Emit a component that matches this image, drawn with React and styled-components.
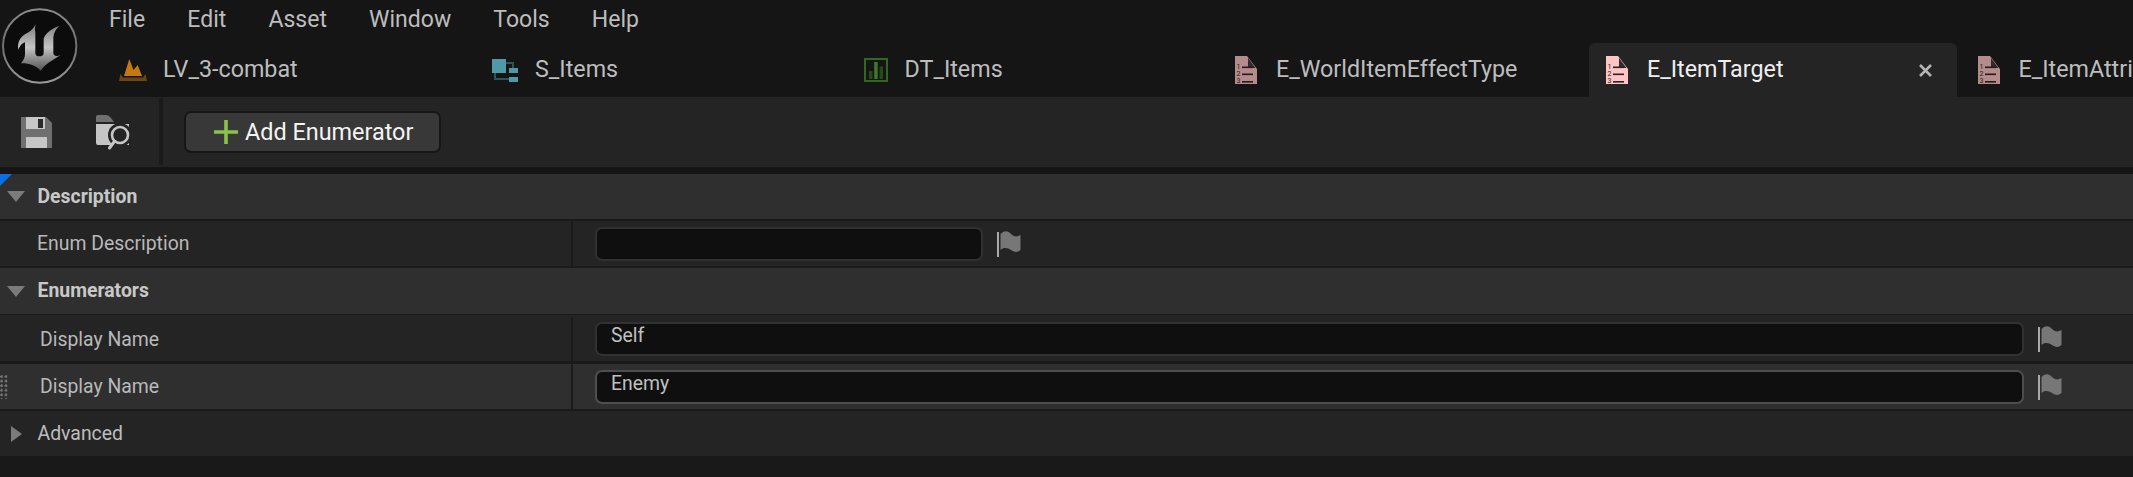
import React from "react";
import styled, { createGlobalStyle } from "styled-components";

const GlobalStyle = createGlobalStyle`
  html, body {
    margin: 0;
    padding: 0;
    background: #191919;
    font-family: Roboto, "Liberation Sans", sans-serif;
  }
`;

const menus = ["File", "Edit", "Asset", "Window", "Tools", "Help"];

const Page = styled.div`
  width: 2133px;
  height: 477px;
  overflow: hidden;
  background: #191919;
  display: flex;
  flex-direction: column;
`;

const Header = styled.header`
  height: 97px;
  background: #151515;
  display: flex;
  flex-shrink: 0;
`;

const LogoSlot = styled.div`
  width: 103px;
  flex-shrink: 0;
  padding: 4px 0 0 0;
`;

const HeaderMain = styled.div`
  flex: 1;
  min-width: 0;
  display: flex;
  flex-direction: column;
`;

const MenuBar = styled.nav`
  height: 43px;
  padding: 0 0 5px 6px;
  box-sizing: border-box;
  display: flex;
  align-items: center;
  gap: 42.2px;
`;

const MenuItem = styled.span`
  font-size: 23px;
  color: #bdbdbd;
`;

const TabRow = styled.div`
  height: 54px;
  display: flex;
  gap: 4px;
  overflow: hidden;
`;

const Tab = styled.div`
  width: 367.5px;
  flex-shrink: 0;
  box-sizing: border-box;
  padding: 0 25px 0 ${(p) => p.$pad}px;
  display: flex;
  align-items: center;
  border-radius: 6px 6px 0 0;
  background: ${(p) => (p.$active ? "#242424" : "transparent")};
`;

const TabIcon = styled.span`
  width: 28px;
  flex-shrink: 0;
  display: flex;
  justify-content: center;
  align-items: center;
`;

const TabLabel = styled.span`
  flex: 1;
  margin: 0 0 2px ${(p) => p.$gap}px;
  font-size: 23.3px;
  white-space: nowrap;
  color: ${(p) => (p.$active ? "#efefef" : "#bdbdbd")};
`;

const Toolbar = styled.div`
  height: 70px;
  flex-shrink: 0;
  background: #242424;
  display: flex;
  align-items: center;
  padding-left: 21px;
`;

const ToolIcon = styled.span`
  display: flex;
  margin-right: ${(p) => p.$gap}px;
`;

const ToolSeparator = styled.span`
  width: 4px;
  height: 67px;
  margin: 0 21px 2px 0;
  background: #1a1a1a;
`;

const AddButton = styled.button`
  width: 257px;
  height: 42px;
  box-sizing: border-box;
  margin-bottom: 1px;
  padding: 0 0 0 28px;
  display: flex;
  align-items: center;
  gap: 7px;
  border: 2px solid #161616;
  border-radius: 7px;
  background: #383838;
  color: #f4f4f4;
  font-family: inherit;
  font-size: 23.4px;
`;

const ToolbarGap = styled.div`
  height: 7px;
  flex-shrink: 0;
  background: #151515;
`;

const Panel = styled.section`
  position: relative;
  display: flex;
  flex-direction: column;
`;

const Corner = styled.span`
  position: absolute;
  top: 0;
  left: 0;
  width: 0;
  height: 0;
  border-top: 12px solid #0b70e6;
  border-right: 12px solid transparent;
`;

const Row = styled.div`
  height: ${(p) => p.$h}px;
  box-sizing: border-box;
  padding-top: ${(p) => p.$top || 0}px;
  display: flex;
  align-items: stretch;
  border-bottom: ${(p) => p.$line}px solid #1a1a1a;
  background: ${(p) => (p.$light ? "#2f2f2f" : "#242424")};
`;

const Category = styled(Row)`
  align-items: center;
  padding-left: ${(p) => (p.$open ? 7 : 11)}px;
`;

const Caret = styled.span`
  width: 0;
  height: 0;
  flex-shrink: 0;
  margin-right: ${(p) => (p.$open ? 12.5 : 15.5)}px;
  border-style: solid;
  border-color: transparent;
  ${(p) =>
    p.$open
      ? "border-width: 11px 9px 0 9px; border-top-color: #7b7b7b;"
      : "border-width: 8.5px 0 8.5px 11px; border-left-color: #7b7b7b;"}
`;

const CategoryTitle = styled.span`
  margin-bottom: 1px;
  font-size: 19.4px;
  color: ${(p) => (p.$plain ? "#bdbdbd" : "#c8c8c8")};
  font-weight: ${(p) => (p.$plain ? 400 : 700)};
`;

const NameCell = styled.div`
  width: 573px;
  flex-shrink: 0;
  box-sizing: border-box;
  padding-left: ${(p) => p.$indent}px;
  display: flex;
  align-items: center;
  border-right: 2px solid #1a1a1a;
`;

const Grip = styled.span`
  width: 9px;
  height: 24px;
  margin: 0 31px 0 0;
  background-image: radial-gradient(circle at 1.5px 1.5px, #787878 1.2px, transparent 1.4px);
  background-size: 4.5px 4.6px;
`;

const NameLabel = styled.span`
  font-size: 19.4px;
  color: #b9b9b9;
`;

const ValueCell = styled.div`
  flex: 1;
  min-width: 0;
  padding: 0 71px 0 22px;
  display: flex;
  align-items: center;
  gap: 14px;
`;

const TextInput = styled.div`
  flex: ${(p) => (p.$narrow ? "0 0 388px" : "1")};
  height: 34px;
  box-sizing: border-box;
  padding: 0 0 0 14px;
  border: 2px solid ${(p) => (p.$hover ? "#4e4e4e" : "#313131")};
  border-radius: 7px;
  background: #0f0f0f;
  font-size: 19.4px;
  line-height: 24px;
  color: #c0c0c0;
`;

const Logo = () => (
  <svg width="84" height="84" viewBox="0 0 252 252">
    <defs>
      <linearGradient id="ueRing" x1="0" y1="0" x2="0" y2="1">
        <stop offset="0" stopColor="#8c8c8c" />
        <stop offset="0.5" stopColor="#6f6f6f" />
        <stop offset="1" stopColor="#9a9a9a" />
      </linearGradient>
      <linearGradient id="ueMark" x1="0" y1="0" x2="0" y2="1">
        <stop offset="0" stopColor="#7d7d7d" />
        <stop offset="0.5" stopColor="#c4c4c4" />
        <stop offset="1" stopColor="#555555" />
      </linearGradient>
    </defs>
    <circle cx="119" cy="126" r="110" fill="#0c0c0c" stroke="url(#ueRing)" strokeWidth="6" />
    <path
      fill="url(#ueMark)"
      d="M107 60 C100 74 92 82 80 88 C62 97 51 113 55 138 C60 124 66 118 75 115 L75 150 C75 160 71 169 63 178 C85 177 106 184 122 200 C135 181 156 169 187 150 C172 159 162 158 160 148 L160 105 C160 90 165 78 178 66 C155 74 136 88 131 104 L131 146 C131 154 126 157 118 157 C110 157 106 153 106 146 L106 85 C104 78 105 70 107 60 Z"
    />
  </svg>
);

const LevelIcon = () => (
  <svg width="28" height="22" viewBox="0 0 28 22">
    <path fill="#c47a0c" d="M5 17 L10.3 0 L14.5 11 L18.7 6 L23 17 Z" />
    <path fill="#6d4511" d="M1.5 15 L4 18.5 H24 L26.5 15 L28 22 H0 Z" />
  </svg>
);

const StructIcon = () => (
  <svg width="28" height="24" viewBox="0 0 28 24">
    <path fill="none" stroke="#2c555b" strokeWidth="2" d="M14 5 H22 V11 M4 14 V21 H19" />
    <rect x="1" y="1" width="14" height="14" fill="#4f9aa6" />
    <rect x="18" y="10" width="9" height="5" fill="#4f9aa6" />
    <rect x="18" y="19" width="9" height="5" fill="#4f9aa6" />
  </svg>
);

const TableIcon = () => (
  <svg width="24" height="24" viewBox="0 0 24 24">
    <rect x="1" y="1" width="22" height="22" fill="none" stroke="#33661f" strokeWidth="2" />
    <rect x="5" y="13" width="3.5" height="8" fill="#244a17" />
    <rect x="10.2" y="4" width="3.5" height="17" fill="#3d7a25" />
    <rect x="15.5" y="8.5" width="3.5" height="12.5" fill="#244a17" />
  </svg>
);

const EnumIcon = ({ active }) => {
  const lineColor = active ? "#2a2222" : "#241c1c";
  return (
    <svg width="22" height="28" viewBox="0 0 22 28">
      <path fill={active ? "#ffc4c4" : "#b58b8b"} d="M0 0 H12 L22 13 V28 H0 Z" />
      <path fill="#342a2a" d="M13 2 L20.5 12 H13 Z" />
      <rect x="7" y="10.5" width="11" height="1.6" fill={lineColor} />
      <rect x="7" y="17.5" width="11" height="1.6" fill={lineColor} />
      <rect x="7" y="25" width="11" height="1.6" fill={lineColor} />
      <g fill={lineColor} fontSize="7" fontFamily="Roboto, sans-serif">
        <text x="1.5" y="12.5">1</text>
        <text x="1.5" y="19.5">2</text>
        <text x="1.5" y="26.5">3</text>
      </g>
    </svg>
  );
};

const CloseIcon = () => (
  <svg width="13" height="13" viewBox="0 0 13 13">
    <path stroke="#b4b4b4" strokeWidth="2.6" d="M1 1 L12 12 M12 1 L1 12" />
  </svg>
);

const SaveIcon = () => (
  <svg width="31" height="31" viewBox="0 0 31 31">
    <path fill="#707070" d="M0 0 H25 L31 6 V31 H0 Z" />
    <rect x="5" y="0" width="19" height="12" fill="#c6c6c6" />
    <rect x="17" y="2" width="5" height="9" fill="#2a2a2a" />
    <rect x="5" y="20" width="21" height="11" fill="#c6c6c6" />
  </svg>
);

const BrowseIcon = () => (
  <svg width="35" height="35" viewBox="0 0 35 35">
    <path fill="#707070" d="M0 7 V2 Q0 0 2 0 H10 Q13 0 15 3 L18 7 Z" />
    <path fill="#c6c6c6" d="M0 9 H33 V30 H2 Q0 30 0 28 Z" />
    <circle cx="24" cy="20" r="12" fill="#242424" />
    <circle cx="24" cy="20" r="8" fill="none" stroke="#c6c6c6" strokeWidth="2.6" />
    <path stroke="#c6c6c6" strokeWidth="3" strokeLinecap="round" d="M18 27 L13.5 33" />
  </svg>
);

const PlusIcon = () => (
  <svg width="24" height="24" viewBox="0 0 24 24">
    <path stroke="#8bc24a" strokeWidth="3.6" d="M12 0 V24 M0 12 H24" />
  </svg>
);

const FlagIcon = () => (
  <svg width="24" height="26" viewBox="0 0 24 26">
    <rect x="0" y="1" width="2" height="25" fill="#a8a8a8" />
    <path
      fill="#777777"
      d="M3.5 3 C8 -1 11 0 14 3 C17 6 20 6 23.5 4 V19 C20 22 17 21 14 19 C11 17 7 16 3.5 19 Z"
    />
  </svg>
);

const tabs = [
  { name: "LV_3-combat", icon: <LevelIcon />, pad: 16, gap: 16 },
  { name: "S_Items", icon: <StructIcon />, pad: 16, gap: 16.5 },
  { name: "DT_Items", icon: <TableIcon />, pad: 16, gap: 14.5 },
  { name: "E_WorldItemEffectType", icon: <EnumIcon />, pad: 14, gap: 16.5 },
  { name: "E_ItemTarget", icon: <EnumIcon active />, active: true, pad: 14, gap: 16 },
  { name: "E_ItemAttribute", icon: <EnumIcon />, pad: 14, gap: 16 },
];

const App = () => {
  return (
    <Page>
      <GlobalStyle />
      <Header>
        <LogoSlot>
          <Logo />
        </LogoSlot>
        <HeaderMain>
          <MenuBar>
            {menus.map((m) => (
              <MenuItem key={m}>{m}</MenuItem>
            ))}
          </MenuBar>
          <TabRow>
            {tabs.map((t) => (
              <Tab key={t.name} $active={t.active} $pad={t.pad}>
                <TabIcon>{t.icon}</TabIcon>
                <TabLabel $active={t.active} $gap={t.gap}>
                  {t.name}
                </TabLabel>
                {t.active && <CloseIcon />}
              </Tab>
            ))}
          </TabRow>
        </HeaderMain>
      </Header>

      <Toolbar>
        <ToolIcon $gap={44}>
          <SaveIcon />
        </ToolIcon>
        <ToolIcon $gap={28}>
          <BrowseIcon />
        </ToolIcon>
        <ToolSeparator />
        <AddButton>
          <PlusIcon />
          Add Enumerator
        </AddButton>
      </Toolbar>
      <ToolbarGap />

      <Panel>
        <Corner />
        <Category $h={47} $line={2} $light $open>
          <Caret $open />
          <CategoryTitle>Description</CategoryTitle>
        </Category>
        <Row $h={47} $line={2}>
          <NameCell $indent={37}>
            <NameLabel>Enum Description</NameLabel>
          </NameCell>
          <ValueCell>
            <TextInput $narrow />
            <FlagIcon />
          </ValueCell>
        </Row>
        <Category $h={47} $line={1} $light $open>
          <Caret $open />
          <CategoryTitle>Enumerators</CategoryTitle>
        </Category>
        <Row $h={49} $line={3} $top={2}>
          <NameCell $indent={40}>
            <NameLabel>Display Name</NameLabel>
          </NameCell>
          <ValueCell>
            <TextInput>Self</TextInput>
            <FlagIcon />
          </ValueCell>
        </Row>
        <Row $h={47} $line={2} $light>
          <NameCell $indent={0}>
            <Grip />
            <NameLabel>Display Name</NameLabel>
          </NameCell>
          <ValueCell>
            <TextInput $hover>Enemy</TextInput>
            <FlagIcon />
          </ValueCell>
        </Row>
        <Category $h={45} $line={0}>
          <Caret />
          <CategoryTitle $plain>Advanced</CategoryTitle>
        </Category>
      </Panel>
    </Page>
  );
};

export default App;
